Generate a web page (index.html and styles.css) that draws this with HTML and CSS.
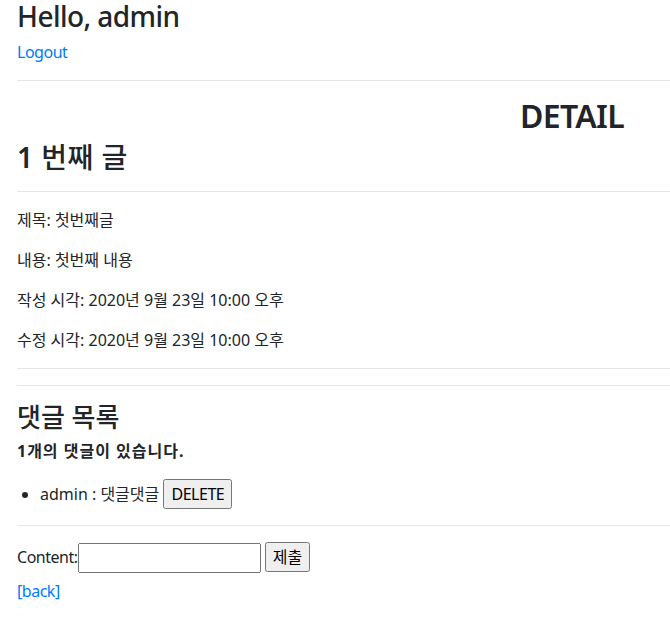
FILE: index.html
```html
<!DOCTYPE html>
<html lang="ko">
<head>
<meta charset="utf-8">
<title>Detail</title>
<link rel="stylesheet" href="styles.css">
</head>
<body>
<div class="container">
  <h3 class="hello">Hello, admin</h3>
  <a class="link latin" href="#">Logout</a>
  <hr>
  <h1 class="title-center">DETAIL</h1>
  <h2 class="post-title"><span class="num">1</span> 번째 글</h2>
  <hr>
  <p>제목: 첫번째글</p>
  <p>내용: 첫번째 내용</p>
  <p>작성 시각: 2020년 9월 23일 10:00 오후</p>
  <p>수정 시각: 2020년 9월 23일 10:00 오후</p>
  <hr>
  <hr>
  <h3 class="comments-title">댓글 목록</h3>
  <strong class="count">1개의 댓글이 있습니다.</strong>
  <ul class="comments">
    <li>admin : 댓글댓글 <button class="btn latin" type="button">DELETE</button></li>
  </ul>
  <hr>
  <form class="comment-form">
    <label class="latin">Content:</label><input type="text" class="input"> <button class="btn" type="button">제출</button>
  </form>
  <a class="link latin" href="#">[back]</a>
</div>
</body>
</html>
```

FILE: styles.css
```css
html, body {
  margin: 0;
  padding: 0;
  overflow-x: hidden;
  background: #fff;
}
body {
  font-family: "Noto Sans", "Noto Sans CJK KR", sans-serif;
  font-size: 16px;
  line-height: 1.5;
  color: #212529;
}
.container {
  width: 1110px;
  padding-left: 17px;
}
h1, h2, h3 {
  margin: 0 0 8px 0;
  font-weight: 500;
  line-height: 1.2;
}
.latin {
  letter-spacing: -0.03em;
}
.hello {
  font-size: 28px;
  letter-spacing: -0.02em;
  margin-bottom: 6px;
}
.link {
  color: #007bff;
  text-decoration: none;
}
hr {
  margin: 16px 0;
  border: 0;
  border-top: 1px solid rgba(0, 0, 0, 0.1);
}
.title-center {
  font-size: 32px;
  font-weight: 600;
  text-align: center;
  letter-spacing: -0.02em;
  margin: 2px 0 6px 0;
}
.post-title {
  font-size: 28px;
  margin-bottom: 9px;
  letter-spacing: 0.5px;
}
.num {
  font-weight: 600;
}
p {
  margin: 0 0 16px 0;
}
.comments-title {
  font-size: 26px;
  margin-bottom: 6px;
}
.count {
  font-weight: 700;
  display: block;
  letter-spacing: 1px;
}
.comments {
  padding-left: 23px;
  margin: 16px 0;
}
.btn {
  font-family: inherit;
  font-size: 16px;
  line-height: 24px;
  padding: 1px 6px;
  margin: 0;
}
.comment-form {
  margin-bottom: 6px;
}
.input {
  width: 175px;
  height: 24px;
  margin: 0;
}
```
